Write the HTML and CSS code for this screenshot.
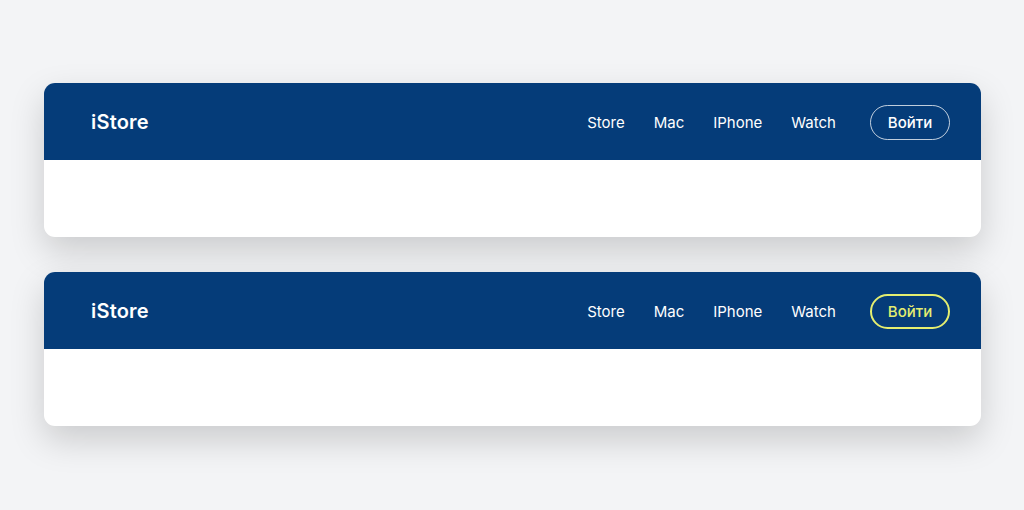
FILE: index.html
```html
<!DOCTYPE html>
<html lang="ru">
<head>
    <meta charset="UTF-8">
    <meta name="viewport" content="width=device-width, initial-scale=1.0">
    <title>iStore header</title>
<link rel="stylesheet" href="styles.css">
</head>
<body>
    <div class="page">
        <div class="card">
            <header class="header">
                <a class="logo" href="#">iStore</a>
                <nav class="nav">
                    <a href="#">Store</a>
                    <a href="#">Mac</a>
                    <a href="#">IPhone</a>
                    <a href="#">Watch</a>
                    <button class="login" type="button">Войти</button>
                </nav>
            </header>
            <div class="card-body"></div>
        </div>

        <div class="card">
            <header class="header">
                <a class="logo" href="#">iStore</a>
                <nav class="nav">
                    <a href="#">Store</a>
                    <a href="#">Mac</a>
                    <a href="#">IPhone</a>
                    <a href="#">Watch</a>
                    <button class="login login-hover" type="button">Войти</button>
                </nav>
            </header>
            <div class="card-body"></div>
        </div>
    </div>
</body>
</html>
```

FILE: styles.css
```css
html {
    background-color: #f3f4f6;
}

body {
    font-family: Inter, "Noto Sans", Arial, sans-serif;
    background-color: #f3f4f6;
    margin: 0;
    padding: 0;
    min-height: 100vh;
}

.page {
    display: flex;
    flex-direction: column;
    gap: 35px;
    padding: 83px 43px 0 44px;
}

.card {
    background-color: #ffffff;
    border-radius: 11px;
    overflow: hidden;
    box-shadow: 0 14px 34px rgba(0, 0, 0, 0.17);
}

.header {
    height: 77px;
    box-sizing: border-box;
    background-color: #053c79;
    display: flex;
    align-items: center;
    justify-content: space-between;
    padding: 1px 31px 0 47px;
}

.logo {
    color: #ffffff;
    font-size: 20px;
    font-weight: 600;
    text-decoration: none;
    letter-spacing: 0.2px;
}

.nav {
    display: flex;
    align-items: center;
    gap: 29px;
}

.nav a {
    color: #ffffff;
    font-size: 15px;
    text-decoration: none;
    margin-top: 1px;
}

.login {
    margin-left: 5px;
    width: 80px;
    height: 35px;
    border: 1px solid rgba(255, 255, 255, 0.75);
    border-radius: 18px;
    background: transparent;
    color: #ffffff;
    font-family: inherit;
    font-size: 15px;
    font-weight: 500;
    cursor: pointer;
}

.login-hover {
    border: 2px solid #e4ee70;
    color: #e4ee70;
}

.card-body {
    height: 77px;
}
```
